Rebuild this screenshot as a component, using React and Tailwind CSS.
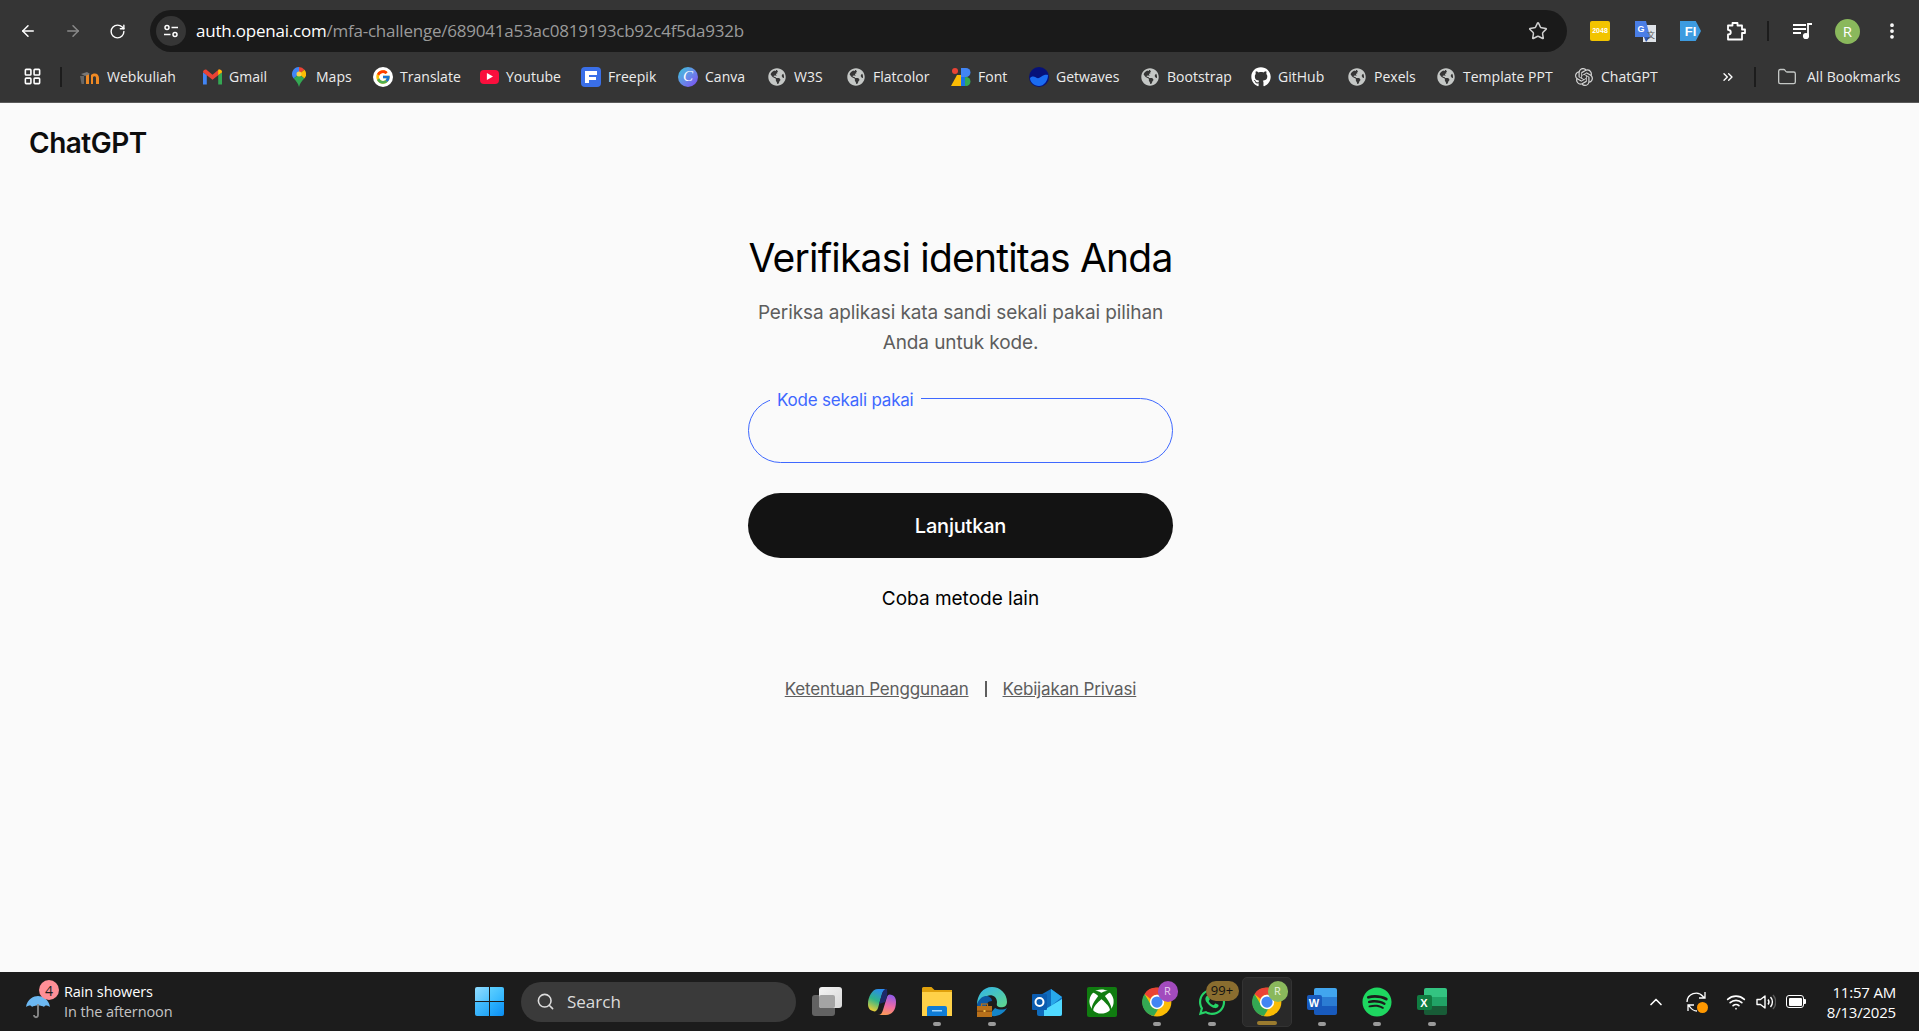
import React from "react";
import { ArrowLeft, ArrowRight, RotateCw, Star, ChevronsRight, Folder, Search, ChevronUp, Wifi, EllipsisVertical, LayoutGrid } from "lucide-react";
import { FaGithub, FaGlobeAmericas, FaWhatsapp, FaSpotify, FaXbox } from "react-icons/fa";
import { FcGoogle } from "react-icons/fc";
import { SiOpenai } from "react-icons/si";

function Globe() {
  return <FaGlobeAmericas className="h-[18px] w-[18px] text-[#c4c7c5]" />;
}

function Moodle() {
  return (
    <svg viewBox="0 0 20 16" className="h-4 w-5" aria-hidden="true">
      <path d="M0 7h4v8H1.500z" fill="#666" />
      <path d="M6 5h3v10H6zM11 6c4-3 8-1 8 3v6h-3V9c0-2-2-2-3-1v7h-2z" fill="#f08a24" />
      <path d="M1 5l6-2 3 2-5 2z" fill="#777" />
    </svg>
  );
}

function Gmail() {
  return (
    <svg viewBox="0 0 20 16" className="h-4 w-[19px]" aria-hidden="true">
      <path d="M0 3v13h4V6z" fill="#4285f4" />
      <path d="M16 6v10h4V3z" fill="#34a853" />
      <path d="M0 3l10 8 10-8c0-3-3-3.500-4-2.500l-6 5-6-5C3-.5 0 0 0 3z" fill="#ea4335" />
      <path d="M16 .5 16 6l4-3c0-3-3-3.500-4-2.500z" fill="#fbbc04" />
    </svg>
  );
}

function Maps() {
  return (
    <svg viewBox="0 0 14 20" className="h-5 w-[14px]" aria-hidden="true">
      <path d="M7 0a7 7 0 0 0-5.300 11.500L7 7z" fill="#4285f4" />
      <path d="M7 0a7 7 0 0 1 5.500 2.700L7 7z" fill="#ea4335" />
      <path d="M12.500 2.700A7 7 0 0 1 12.300 11.500L7 7z" fill="#fbbc04" />
      <path d="M1.700 11.500 7 7l5.300 4.500C10 14 8 16 7 20c-1-4-3-6-5.300-8.500z" fill="#34a853" />
      <circle cx="7" cy="7" r="2.500" fill="#f8d24a" />
    </svg>
  );
}

function GoogleIcon() {
  return (
    <span className="grid h-5 w-5 place-items-center rounded-full bg-white">
      <FcGoogle className="h-4 w-4" />
    </span>
  );
}

function Youtube() {
  return (
    <span className="flex h-[14px] w-[19px] items-center justify-center rounded-[4px] bg-[#fa0f3d]">
      <svg viewBox="0 0 8 8" className="h-[7px] w-[7px]" aria-hidden="true">
        <path d="M1 0l7 4-7 4z" fill="#fff" />
      </svg>
    </span>
  );
}

function Freepik() {
  return (
    <svg viewBox="0 0 20 20" className="h-5 w-5" aria-hidden="true">
      <rect width="20" height="20" rx="4" fill="#3a6fe8" />
      <path d="M4 4h12v4H8v2h7v3H8v3H4z" fill="#fff" />
      <path d="M8 8h8v2H8z" fill="#3a6fe8" />
    </svg>
  );
}

function Canva() {
  return (
    <span className="grid h-5 w-5 place-items-center rounded-full bg-gradient-to-br from-[#1fc4d8] to-[#7b3ff2] font-['Liberation_Serif',serif] text-[15px] leading-none text-white italic">
      C
    </span>
  );
}

function FontIcon() {
  return (
    <svg viewBox="0 0 20 20" className="h-5 w-5" aria-hidden="true">
      <path d="M0 19 6 8h4v11z" fill="#fbbc04" />
      <circle cx="4" cy="4" r="3" fill="#ea4335" />
      <path d="M10 1h5a4 4 0 0 1 0 9h-5z" fill="#4285f4" />
      <circle cx="15" cy="14.500" r="4.500" fill="#34a853" />
      <path d="M10 10h4v9h-4z" fill="#1a73e8" />
    </svg>
  );
}

function Getwaves() {
  return (
    <svg viewBox="0 0 20 20" className="h-5 w-5" aria-hidden="true">
      <circle cx="10" cy="10" r="10" fill="#06117a" />
      <path d="M1 11c4-4 6 1 9 0s4-4 9-3c0 6-4 11-9 11s-9-4-9-8z" fill="#1a6cf2" />
    </svg>
  );
}

function Chrome() {
  return (
    <svg viewBox="0 0 48 48" className="h-[30px] w-[30px]" aria-hidden="true">
      <circle cx="24" cy="24" r="23" fill="#fbbc04" />
      <path d="M24 1a23 23 0 0 1 20 11.500H24A11.500 11.500 0 0 0 13.500 19L4 11A23 23 0 0 1 24 1z" fill="#ea4335" />
      <path d="M4 11l10 17a11.500 11.500 0 0 0 12 7.300L19 46.500A23 23 0 0 1 4 11z" fill="#34a853" />
      <circle cx="24" cy="24" r="11.500" fill="#fff" />
      <circle cx="24" cy="24" r="9" fill="#4285f4" />
    </svg>
  );
}

function Windows() {
  return (
    <div className="grid h-[29px] w-[29px] grid-cols-2 gap-[1px]">
      <div className="rounded-tl-[2px] bg-gradient-to-br from-[#8fdcff] to-[#4cc2ff]" />
      <div className="rounded-tr-[2px] bg-gradient-to-br from-[#5dd0ff] to-[#2ab3ff]" />
      <div className="rounded-bl-[2px] bg-gradient-to-br from-[#4cc2ff] to-[#1fa3f5]" />
      <div className="rounded-br-[2px] bg-gradient-to-br from-[#2db4ff] to-[#0a8df0]" />
    </div>
  );
}

function TaskView() {
  return (
    <div className="relative h-[29px] w-[30px]">
      <div className="absolute bottom-0 left-0 h-[21px] w-[23px] rounded-[3px] bg-[#626262]" />
      <div className="absolute top-0 right-0 h-[21px] w-[23px] rounded-[3px] bg-gradient-to-br from-[#f4f4f4] to-[#d8d8d8]" />
      <div className="absolute top-[8px] left-[7px] h-[13px] w-[16px] rounded-[2px] bg-[#a4a4a4]" />
    </div>
  );
}

function Copilot() {
  return (
    <svg viewBox="0 0 30 30" className="h-[30px] w-[30px]" aria-hidden="true">
      <defs>
        <linearGradient id="copA" x1="0.6" y1="0" x2="0.2" y2="1">
          <stop offset="0" stopColor="#2a8bf0" />
          <stop offset="0.5" stopColor="#2fb58a" />
          <stop offset="1" stopColor="#f9cf2e" />
        </linearGradient>
        <linearGradient id="copB" x1="0.6" y1="0" x2="0.4" y2="1">
          <stop offset="0" stopColor="#8f5be8" />
          <stop offset="0.55" stopColor="#ee6aa6" />
          <stop offset="1" stopColor="#fb9a57" />
        </linearGradient>
      </defs>
      <path d="M11 2h9c-3 0-4 2-5 5L11 21c-1 3-3 4-5 3C2 23 1 20 1 17 1 10 5 2 11 2z" fill="url(#copA)" />
      <path d="M19 28h-8c3 0 4-2 5-5l4-13c1-3 3-3 5-2 3 1 4 4 4 7 0 8-4 13-10 13z" fill="url(#copB)" />
      <path d="M20 2c-3 0-4 2-5 5l-3 10 6-2 2-6c.5-3 0-6 0-7z" fill="#1d2a6b" />
    </svg>
  );
}

function Explorer() {
  return (
    <svg viewBox="0 0 30 29" className="h-[29px] w-[30px]" aria-hidden="true">
      <path d="M0 1.500A1.500 1.500 0 0 1 1.500 0h8l3 3H30v5H0z" fill="#e0a10c" />
      <path d="M0 5h30v24H0z" fill="#ffd148" />
      <path d="M5 21a2 2 0 0 1 2-2h16a2 2 0 0 1 2 2v8H5z" fill="#0f7cd6" />
      <path d="M10 23h10v1.500H10z" fill="#9fd6ff" />
    </svg>
  );
}

function Edge() {
  return (
    <svg viewBox="0 0 30 30" className="h-[30px] w-[30px]" aria-hidden="true">
      <defs>
        <linearGradient id="edgeA" x1="0" y1="0" x2="1" y2="1">
          <stop offset="0" stopColor="#2fb3ee" />
          <stop offset="1" stopColor="#62d88a" />
        </linearGradient>
      </defs>
      <path d="M15 0a15 15 0 0 1 15 15c0 5-5 6-8 5-3-1-2-3-2-5 0-5-5-8-10-6-4 1-8 5-10 9C0 8 6 0 15 0z" fill="url(#edgeA)" />
      <path d="M0 18c1-5 5-9 9-9 3 0 6 2 6 5-4 0-6 3-6 6s3 7 7 9c-8 2-14-3-16-11z" fill="#0c59a4" />
      <path d="M12 28c6 3 14 0 18-7-3 2-8 2-12 0z" fill="#1585c8" />
      <rect x="0" y="19" width="15" height="11" fill="#b8701a" />
      <rect x="0" y="23.500" width="15" height="1.500" fill="#8a4f0e" />
      <rect x="4.500" y="17" width="6" height="2.500" fill="none" stroke="#b8701a" strokeWidth="1.200" />
      <rect x="6.500" y="23" width="2" height="2" fill="#f4c24a" />
    </svg>
  );
}

function Outlook() {
  return (
    <svg viewBox="0 0 30 30" className="h-[30px] w-[30px]" aria-hidden="true">
      <path d="M5 10 19 2l11 8v17a2 2 0 0 1-2 2H7a2 2 0 0 1-2-2z" fill="#0f6cbd" />
      <path d="M19 2l11 8-11 9z" fill="#28a8ea" />
      <path d="M12 29h16a2 2 0 0 0 2-2V12L12 23z" fill="#50d9ff" />
      <rect x="0" y="7" width="15" height="16" rx="1" fill="#0b5cb0" />
      <circle cx="7.500" cy="15" r="4" fill="none" stroke="#fff" strokeWidth="2" />
    </svg>
  );
}

function Xbox() {
  return (
    <div className="grid h-[30px] w-[30px] place-items-center rounded-[2px] bg-[#107c10]">
      <FaXbox className="h-[25px] w-[25px] text-white" />
    </div>
  );
}

function OfficeDoc({ letter, dark, top, mid, bottom }) {
  return (
    <div className="relative h-[27px] w-[30px]">
      <div className="absolute top-0 right-0 flex h-[27px] w-[23px] flex-col overflow-hidden rounded-[2px]">
        <div className={`flex-1 ${top}`} />
        <div className={`flex-1 ${mid}`} />
        <div className={`flex-1 ${bottom}`} />
      </div>
      <div className={`absolute top-[7px] left-0 grid h-[15px] w-[15px] place-items-center rounded-[2px] font-['Liberation_Sans',sans-serif] text-[11px] font-bold text-white ${dark}`}>
        {letter}
      </div>
    </div>
  );
}

const bookmarks = [
  { label: "Webkuliah", width: "w-[122px]", icon: <Moodle /> },
  { label: "Gmail", width: "w-[87px]", icon: <Gmail /> },
  { label: "Maps", width: "w-[84px]", icon: <Maps /> },
  { label: "Translate", width: "w-[106px]", icon: <GoogleIcon /> },
  { label: "Youtube", width: "w-[102px]", icon: <Youtube /> },
  { label: "Freepik", width: "w-[97px]", icon: <Freepik /> },
  { label: "Canva", width: "w-[89px]", icon: <Canva /> },
  { label: "W3S", width: "w-[79px]", icon: <Globe /> },
  { label: "Flatcolor", width: "w-[105px]", icon: <Globe /> },
  { label: "Font", width: "w-[78px]", icon: <FontIcon /> },
  { label: "Getwaves", width: "w-[111px]", icon: <Getwaves /> },
  { label: "Bootstrap", width: "w-[111px]", icon: <Globe /> },
  { label: "GitHub", width: "w-[96px]", icon: <FaGithub className="h-5 w-5 text-white" /> },
  { label: "Pexels", width: "w-[89px]", icon: <Globe /> },
  { label: "Template PPT", width: "w-[138px]", icon: <Globe /> },
  { label: "ChatGPT", width: "w-[146px]", icon: <SiOpenai className="h-[18px] w-[18px] text-[#d5d5d5]" /> },
];

function BrowserBar() {
  return (
    <div className="flex h-[103px] flex-col border-b border-[#5a5a5a] bg-[#353535] font-['Open_Sans',sans-serif]">
      <div className="flex h-[52px] items-end">
        <div className="flex h-[42px] w-[150px] items-center pl-[19px]">
          <ArrowLeft className="h-[18px] w-[18px] text-white" strokeWidth={2} />
          <ArrowRight className="ml-[27px] h-[18px] w-[18px] text-[#8a8a8a]" strokeWidth={2} />
          <RotateCw className="ml-[27px] h-[17px] w-[17px] text-white" strokeWidth={2} />
        </div>
        <div className="flex h-[42px] w-[1417px] items-center rounded-full bg-[#1a1a1a] pl-[6px]">
          <div className="grid h-[30px] w-[30px] place-items-center rounded-full bg-[#363636]">
            <svg viewBox="0 0 16 16" className="h-4 w-4 text-white" fill="none" stroke="currentColor" strokeWidth="1.500" aria-hidden="true">
              <circle cx="4" cy="4.500" r="2" />
              <path d="M8.500 4.500H15M1 11.500h6.500" />
              <circle cx="12" cy="11.500" r="2" />
            </svg>
          </div>
          <div className="ml-[10px] text-[17px] tracking-[-0.22px] whitespace-nowrap text-white">
            auth.openai.com<span className="text-[#9a9a9a]">/mfa-challenge/689041a53ac0819193cb92c4f5da932b</span>
          </div>
          <Star className="mr-[19px] ml-auto h-5 w-5 text-[#d0d0d0]" strokeWidth={1.8} />
        </div>
        <div className="flex h-[42px] flex-1 items-center pl-[23px]">
          <div className="grid h-5 w-5 place-items-center rounded-[2px] bg-[#f2c400] font-['Liberation_Sans',sans-serif] text-[7px] font-bold text-white">2048</div>
          <svg viewBox="0 0 21 21" className="ml-[25px] h-[21px] w-[21px]" aria-hidden="true">
            <path d="M8 4h13v17H8z" fill="#dfe3e8" />
            <path d="M0 0h11l4 16H0z" fill="#4a7ee6" />
            <path d="M9 16h6l-4 5z" fill="#2f57b3" />
            <text x="2.500" y="11" fontFamily="Liberation Sans" fontSize="9" fontWeight="700" fill="#fff">G</text>
            <text x="12" y="17" fontFamily="Noto Sans CJK SC" fontSize="8" fill="#555">文</text>
          </svg>
          <div className="ml-[24px] flex h-5 w-[21px] items-center justify-center bg-[#3d9be0] [clip-path:polygon(0_0,75%_0,100%_50%,75%_100%,0_100%)] font-['Liberation_Sans',sans-serif] text-[13px] leading-none font-bold text-white">
            FI
          </div>
          <svg viewBox="0 0 20 20" className="ml-[25px] h-5 w-5 text-white" fill="none" stroke="currentColor" strokeWidth="1.800" strokeLinejoin="round" aria-hidden="true">
            <path d="M2 4.500h4.500V2h5v2.500H16V8.500h3v3.500h-3v6.500H2V13.500c2 0 2.800-.8 2.800-2.300S4 8.800 2 8.800z" />
          </svg>
          <div className="ml-[21px] h-5 w-[2px] bg-[#1c1c1c]" />
          <svg viewBox="0 0 20 20" className="ml-[24px] h-5 w-5 text-white" fill="none" stroke="currentColor" strokeWidth="1.800" aria-hidden="true">
            <path d="M0 4h13M0 8h13M0 12h8M15 15V3h4" />
            <circle cx="13" cy="15" r="2.200" fill="currentColor" />
          </svg>
          <div className="ml-[22px] grid h-[25px] w-[25px] place-items-center rounded-full bg-[#8ab85c] text-[15px] text-white">R</div>
          <EllipsisVertical className="ml-[22px] h-5 w-5 text-white" strokeWidth={2.5} />
        </div>
      </div>
      <div className="flex flex-1 items-center pb-[1px] text-[14px] tracking-[0.02px] text-[#ececec]">
        <LayoutGrid className="ml-[23px] h-[19px] w-[19px] text-white" strokeWidth={2} />
        <div className="mr-[18px] ml-[18px] h-[20px] w-[2px] bg-[#1c1c1c]" />
        {bookmarks.map((b) => (
          <div key={b.label} className={`flex items-center whitespace-nowrap ${b.width}`}>
            <span className="mr-[7px] flex w-[20px] justify-center">{b.icon}</span>
            {b.label}
          </div>
        ))}
        <ChevronsRight className="h-4 w-4 text-white" strokeWidth={2} />
        <div className="mr-[21px] ml-[18px] h-[20px] w-[2px] bg-[#1c1c1c]" />
        <Folder className="mr-[10px] h-5 w-5 text-[#c4c7c5]" strokeWidth={1.6} />
        All Bookmarks
      </div>
    </div>
  );
}

function LoginPage() {
  return (
    <main className="flex flex-1 flex-col bg-[#fafafa] font-['Inter',sans-serif]">
      <div className="mt-[24px] ml-[29px] text-[28px] leading-[32px] font-semibold tracking-[-0.5px] text-[#0d0d0d]">ChatGPT</div>
      <div className="mt-[74px] ml-[748px] flex w-[425px] flex-col items-center">
        <h1 className="text-[39px] leading-[50px] font-normal tracking-[-0.8px] whitespace-nowrap text-black">Verifikasi identitas Anda</h1>
        <p className="mt-[15px] text-center text-[19px] leading-[30px] tracking-[-0.1px] text-[#5d5d5d]">
          Periksa aplikasi kata sandi sekali pakai pilihan
          <br />
          Anda untuk kode.
        </p>
        <div className="relative mt-[40px] h-[65px] w-full rounded-full border border-[#3e68ff]">
          <span className="absolute top-[-9px] left-[21px] bg-[#fafafa] px-[7px] text-[17px] leading-[20px] tracking-[-0.2px] text-[#3e68ff]">Kode sekali pakai</span>
        </div>
        <button type="button" className="mt-[30px] h-[65px] w-full rounded-full bg-[#131313] text-[20px] font-medium tracking-[-0.2px] text-white">Lanjutkan</button>
        <div className="mt-[28px] text-[19px] leading-[26px] text-black">Coba metode lain</div>
        <div className="mt-[65px] flex items-center text-[17px] leading-[24px] tracking-[-0.15px] text-[#5d5d5d]">
          <span className="underline">Ketentuan Penggunaan</span>
          <span className="mx-[16px] h-[16px] w-[2px] bg-[#5d5d5d]" />
          <span className="underline">Kebijakan Privasi</span>
        </div>
      </div>
    </main>
  );
}

function TaskIcon({ children, dot, active, badge }) {
  return (
    <div className={`relative mx-[2.500px] grid h-[50px] w-[50px] place-items-center rounded-[5px] ${active ? "border border-[#333] bg-[#292929]" : ""}`}>
      {children}
      {badge}
      {dot && <span className="absolute bottom-[1px] left-1/2 h-[4px] w-[8px] -translate-x-1/2 rounded-full bg-[#9a9a9a]" />}
      {active && <span className="absolute bottom-[1px] left-1/2 h-[4px] w-[20px] -translate-x-1/2 rounded-full bg-[#9a7b2f]" />}
    </div>
  );
}

function Taskbar() {
  return (
    <footer className="flex h-[59px] items-center bg-[#1c1c1c] font-['Open_Sans',sans-serif] text-white">
      <div className="relative ml-[26px] flex w-[147px] items-center">
        <svg viewBox="0 0 24 24" className="mt-[10px] h-[24px] w-[24px]" aria-hidden="true">
          <path d="M0 12C1 4 8 1 12 1s11 3 12 11c-3-2-5-2-6 0-2-2-10-2-12 0-1-2-3-2-6 0z" fill="#6cb8f2" />
          <path d="M12 9v11c0 3-4 3-4 0" fill="none" stroke="#8a8a8a" strokeWidth="1.800" />
        </svg>
        <span className="absolute top-[-2px] left-[13px] grid h-[20px] w-[20px] place-items-center rounded-full bg-[#ff8f97] text-[14px] text-[#1c1c1c]">4</span>
        <div className="ml-[14px] text-[14.500px] leading-[20px] tracking-[-0.1px] whitespace-nowrap">
          <div>Rain showers</div>
          <div className="text-[#c4c4c4]">In the afternoon</div>
        </div>
      </div>
      <div className="ml-[302px]">
        <Windows />
      </div>
      <div className="ml-[17px] flex h-[40px] w-[275px] items-center rounded-full bg-[#3a3a3a] pl-[15px] text-[#dcdcdc]">
        <Search className="h-[19px] w-[19px]" strokeWidth={2} />
        <span className="ml-[12px] text-[17px]">Search</span>
      </div>
      <div className="ml-[-10px] flex items-center pl-[13px]">
        <TaskIcon><TaskView /></TaskIcon>
        <TaskIcon><Copilot /></TaskIcon>
        <TaskIcon dot><Explorer /></TaskIcon>
        <TaskIcon dot><Edge /></TaskIcon>
        <TaskIcon><Outlook /></TaskIcon>
        <TaskIcon><Xbox /></TaskIcon>
        <TaskIcon dot badge={<span className="absolute top-[4px] left-[26px] grid h-[21px] w-[20px] place-items-center rounded-full bg-[#a24bbd] text-[11px] text-[#e8cdf0]">R</span>}>
          <Chrome />
        </TaskIcon>
        <TaskIcon dot badge={<span className="absolute top-[4px] left-[19px] grid h-[20px] w-[33px] place-items-center rounded-full bg-[#8a6d2f] text-[13px] text-[#111]">99+</span>}>
          <FaWhatsapp className="h-[30px] w-[30px] text-[#25d366]" />
        </TaskIcon>
        <TaskIcon active badge={<span className="absolute top-[3px] left-[25px] grid h-[21px] w-[20px] place-items-center rounded-full bg-[#8ab85c] text-[11px] text-[#e8f2dc]">R</span>}>
          <Chrome />
        </TaskIcon>
        <TaskIcon dot><OfficeDoc letter="W" dark="bg-[#185abd]" top="bg-[#41a5ee]" mid="bg-[#2b7cd3]" bottom="bg-[#185abd]" /></TaskIcon>
        <TaskIcon dot><FaSpotify className="h-[30px] w-[30px] text-[#1ed760]" /></TaskIcon>
        <TaskIcon dot><OfficeDoc letter="X" dark="bg-[#107c41]" top="bg-[#33c481]" mid="bg-[#21a366]" bottom="bg-[#185c37]" /></TaskIcon>
      </div>
      <div className="mr-[23px] ml-auto flex items-center">
        <ChevronUp className="h-[20px] w-[20px]" strokeWidth={2} />
        <div className="relative ml-[20px] h-[22px] w-[22px]">
          <svg viewBox="0 0 22 22" className="h-[22px] w-[22px] text-white" fill="none" stroke="currentColor" strokeWidth="1.300" aria-hidden="true">
            <path d="M1 11A9 9 0 0 1 17 5.500L19 7M19 1v6h-6M2 14l2 2a9 9 0 0 0 7 4M2 20v-6h6" />
          </svg>
          <span className="absolute right-0 bottom-0 h-[11px] w-[11px] rounded-full bg-[#ff9800]" />
        </div>
        <Wifi className="ml-[18px] h-[20px] w-[20px]" strokeWidth={2} />
        <svg viewBox="0 0 20 20" className="ml-[10px] h-5 w-5 text-white" fill="none" stroke="currentColor" strokeWidth="1.400" aria-hidden="true">
          <path d="M1 7.500h3.500L9 4v12l-4.500-3.500H1z" strokeLinejoin="round" />
          <path d="M12 7.500a4 4 0 0 1 0 5M14.500 5a7.500 7.500 0 0 1 0 10" />
          <path d="M17 3a10.500 10.500 0 0 1 0 14" stroke="#5a5a5a" />
        </svg>
        <div className="ml-[10px] flex items-center">
          <div className="h-[13px] w-[18px] rounded-[3px] border border-white p-[1.500px]">
            <div className="h-full w-[13px] rounded-[1px] bg-white" />
          </div>
          <div className="h-[5px] w-[2px] rounded-r-[1px] bg-white" />
        </div>
        <div className="ml-[18px] w-[72px] text-right text-[15px] leading-[20px] tracking-[-0.2px] whitespace-nowrap">
          <div>11:57 AM</div>
          <div>8/13/2025</div>
        </div>
      </div>
    </footer>
  );
}

export default function App() {
  return (
    <div className="flex h-screen flex-col overflow-hidden">
      <BrowserBar />
      <LoginPage />
      <Taskbar />
    </div>
  );
}
